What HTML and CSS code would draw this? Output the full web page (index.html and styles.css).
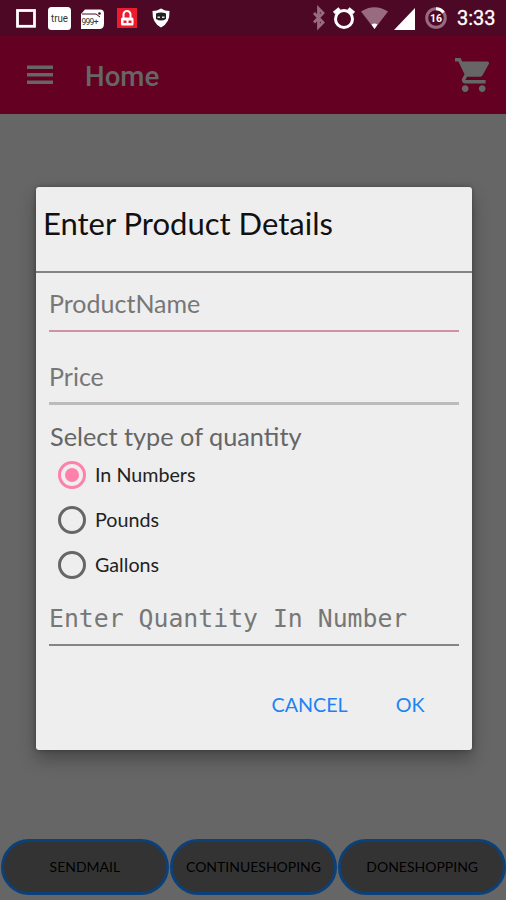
FILE: index.html
```html
<!DOCTYPE html>
<html lang="en">
<head>
<meta charset="utf-8">
<title>Home</title>
<link rel="stylesheet" href="styles.css">
</head>
<body>
<div class="screen">
  <header class="status">
    <svg class="status-icons" width="180" height="36" viewBox="0 0 180 36">
      <rect x="17.500" y="10.500" width="17" height="15.800" fill="none" stroke="#fff" stroke-width="2.800"/>
      <rect x="48" y="7" width="23" height="23" rx="3.500" fill="#fff"/>
      <text x="51" y="21.500" class="tiny true" textLength="17" lengthAdjust="spacingAndGlyphs">true</text>
      <path d="M85 9.500h15q4 0 4 4v10q0 5-4 5.500H81V14z" fill="#fff"/>
      <path d="M82 14h14l4 3" fill="none" stroke="#4d0826" stroke-width="1"/>
      <circle cx="99.500" cy="13.500" r="1.300" fill="#4d0826"/>
      <text x="81.500" y="24.500" class="tiny" textLength="17">999+</text>
      <rect x="117" y="8" width="20" height="20" fill="#ec1c2e"/>
      <path d="M123.500 18v-3.500a3.500 3.500 0 0 1 7 0V18" fill="none" stroke="#fff" stroke-width="2"/>
      <rect x="121" y="17.500" width="12.500" height="8" rx="1.500" fill="#fff"/>
      <path d="M123.500 20.500h3v2.500h-3zM128.500 20.500h3v2.500h-3z" fill="#ec1c2e"/>
      <path d="M161 8.500q4 2.500 8.500 2.500.5 12-8.500 16.500-9-4.500-8.500-16.500 4.500 0 8.500-2.500z" fill="#fff"/>
      <path d="M156 13.500q5-2 10 0v5.500q-5 3-10 0z" fill="#252024"/>
      <path d="M157.500 16.500h2.500v1.500h-2.500zM162 16.500h2.500v1.500h-2.500z" fill="#ddd"/>
    </svg>
    <svg class="status-icons" width="140" height="36" viewBox="310 0 140 36">
      <path d="M314 13l9 9.500-4.500 4.500V8.500l4.500 4.500-9 9.500" fill="none" stroke="#986b80" stroke-width="2.800"/>
      <circle cx="344" cy="19" r="8.500" fill="none" stroke="#fff" stroke-width="3"/>
      <path d="M334 13l5.500-4.500M354 13l-5.500-4.500" stroke="#fff" stroke-width="3.400"/>
      <path d="M361 11.500q13.500-8.500 27 0L374.500 29z" fill="#986b80"/>
      <path d="M371.500 24.500q3-2 6 0l-3 4.500z" fill="#fff"/>
      <path d="M394 30L415 8v22z" fill="#fff"/>
      <circle cx="436" cy="18" r="9.300" fill="none" stroke="#986b80" stroke-width="3"/>
      <path d="M436 8.700a9.300 9.300 0 0 1 7.500 3.800" fill="none" stroke="#fff" stroke-width="3"/>
      <text x="436" y="21.500" class="battery" text-anchor="middle">16</text>
    </svg>
    <span class="clock">3:33</span>
  </header>
  <nav class="appbar">
    <svg class="menu" width="26" height="20" viewBox="0 0 26 20"><path d="M0 2.200h26M0 9.700h26M0 17.200h26" stroke="#666" stroke-width="3.400"/></svg>
    <h1>Home</h1>
    <svg class="cart" width="34" height="34" viewBox="1 2 20 20" fill="#666"><path d="M7 18c-1.100 0-1.990.9-1.990 2S5.900 22 7 22s2-.9 2-2-.9-2-2-2zM1 2v2h2l3.600 7.590-1.350 2.450c-.16.280-.25.610-.25.960 0 1.100.9 2 2 2h12v-2H7.420c-.14 0-.25-.11-.25-.25l.03-.12.900-1.630h7.450c.75 0 1.410-.41 1.750-1.030l3.580-6.490A1 1 0 0 0 20 4H5.210l-.94-2H1zm16 16c-1.100 0-1.990.9-1.990 2s.89 2 1.990 2 2-.9 2-2-.9-2-2-2z"/></svg>
  </nav>
  <main class="content">
    <section class="dialog">
      <h2>Enter Product Details</h2>
      <div class="form">
        <div class="field name">ProductName</div>
        <div class="field price">Price</div>
        <div class="label">Select type of quantity</div>
        <div class="option"><i class="radio checked"></i><span>In Numbers</span></div>
        <div class="option"><i class="radio"></i><span>Pounds</span></div>
        <div class="option"><i class="radio"></i><span>Gallons</span></div>
        <div class="field quantity">Enter Quantity In Number</div>
      </div>
      <div class="actions"><span>CANCEL</span><span>OK</span></div>
    </section>
  </main>
  <footer class="buttons">
    <div class="pill"><span>SENDMAIL</span></div>
    <div class="pill"><span>CONTINUESHOPING</span></div>
    <div class="pill"><span>DONESHOPPING</span></div>
  </footer>
</div>
</body>
</html>
```
FILE: styles.css
```css
* { box-sizing: border-box; }
body { margin: 0; font-family: Lato, sans-serif; }
.screen { width: 506px; height: 900px; background: #666; display: flex; flex-direction: column; overflow: hidden; }
.status { height: 36px; background: #4d0826; display: flex; align-items: center; flex: none; }
.status-icons { flex: none; }
.status-icons + .status-icons { margin-left: 130px; }
.tiny { font: 8.5px Roboto, sans-serif; fill: #333; }
.true { font-size: 10px; }
.battery { font: bold 10.5px Roboto, sans-serif; fill: #fff; }
.clock { font: 20px/36px Roboto, sans-serif; color: #fff; margin-left: 7px; -webkit-text-stroke: .3px #fff; }
.appbar { height: 78px; background: #640022; display: flex; align-items: center; flex: none; padding: 0 17px 0 27px; }
.appbar h1 { margin: 3px 0 0 32px; font: 500 27.7px/36px Roboto, sans-serif; color: #666; flex: 1; }
.cart { flex: none; }
.content { flex: 1; padding: 72.5px 34.5px 0 36px; }
.dialog { height: 563px; background: #eee; border-radius: 3px; box-shadow: 0 9px 18px rgba(0,0,0,.3), 0 0 4px rgba(0,0,0,.3); white-space: nowrap; }
.dialog h2 { margin: 0; height: 86px; border-bottom: 2px solid #838383; padding: 17px 0 0 7px; font-weight: 400; font-size: 31px; line-height: 38px; color: #111; }
.form { padding: 0 12.5px 0 13px; }
.field { font-size: 25px; line-height: 32px; color: #777; }
.name { height: 59px; padding-top: 14px; border-bottom: 2px solid #ce91a5; }
.price { height: 73px; padding-top: 28px; border-bottom: 3px solid #bbb; }
.label { height: 48px; padding: 15px 0 0 1px; font-size: 25.3px; line-height: 32px; color: #666; }
.option { height: 45px; display: flex; align-items: center; font-size: 19.7px; color: #222; padding-left: 9px; gap: 9px; }
.option span { margin-top: -1px; }
.radio { width: 28px; height: 28px; border: 3px solid #666; border-radius: 50%; display: flex; align-items: center; justify-content: center; }
.radio.checked { border-color: #ff80ab; }
.radio.checked::after { content: ""; width: 14px; height: 14px; border-radius: 50%; background: #ff80ab; }
.quantity { height: 58px; padding-top: 15px; border-bottom: 2px solid #858585; font-family: "DejaVu Sans Mono", monospace; font-size: 24.8px; }
.actions { display: flex; justify-content: flex-end; gap: 48px; padding: 45px 47px 0 0; font-size: 19.700px; line-height: 28px; color: #1b83f5; }
.buttons { height: 63px; padding: 2px 0 0 1px; display: flex; gap: 1px; }
.pill { width: 168px; height: 56px; border: 3px solid #0c4078; border-radius: 28px; background: #333; color: #000; font-size: 14px; display: flex; align-items: center; justify-content: center; }
.pill span { margin-top: -1px; }
```
